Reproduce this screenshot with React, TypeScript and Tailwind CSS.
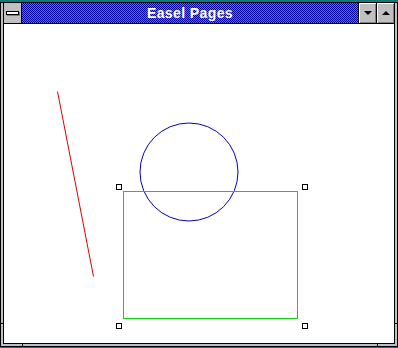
export default function App() {
  const handles = [
    [119, 187],
    [305, 187],
    [119, 326],
    [305, 326],
  ];

  return (
    <div className="w-[398px] h-[348px] bg-[#008080] pt-[2px] pb-[1px]">
      <div className="relative flex flex-col h-full border border-black bg-[#c0c0c0]">
        {/* sizing-border corner ticks */}
        <div className="absolute left-0 top-[320px] w-[3px] h-px bg-black" />
        <div className="absolute right-0 top-[320px] w-[3px] h-px bg-black" />
        <div className="absolute bottom-0 left-[21px] w-px h-[3px] bg-black" />
        <div className="absolute bottom-0 right-[19px] w-px h-[3px] bg-black" />

        <div className="flex flex-col flex-1 mx-[2px] mb-[2px] border-l border-r border-b border-black">
          {/* title bar */}
          <div className="flex h-[21px] border-b border-black">
            <div className="w-[18px] flex items-center justify-center bg-[#c0c0c0] border-r border-black">
              <div className="w-[13px] h-[4px] border border-black bg-white shadow-[1px_1px_0_#808080]" />
            </div>
            <div className="flex-1 flex items-center justify-center bg-[repeating-conic-gradient(#0000a0_0_25%,#4078e8_0_50%)] bg-[length:2px_2px]">
              <span className="text-white font-bold text-[14px] leading-none tracking-[0.4px] font-['Liberation_Sans',Arial,sans-serif]">
                Easel Pages
              </span>
            </div>
            <div className="w-[18px] flex items-center justify-center bg-[#c0c0c0] border-l border-black shadow-[inset_1px_1px_0_#fff,inset_-1px_-1px_0_#808080]">
              <div className="w-0 h-0 border-l-[4px] border-r-[4px] border-t-[4px] border-l-transparent border-r-transparent border-t-black" />
            </div>
            <div className="w-[18px] flex items-center justify-center bg-[#c0c0c0] border-l border-black shadow-[inset_1px_1px_0_#fff,inset_-1px_-1px_0_#808080]">
              <div className="w-0 h-0 border-l-[4px] border-r-[4px] border-b-[4px] border-l-transparent border-r-transparent border-b-black" />
            </div>
          </div>

          {/* client canvas */}
          <div className="relative flex-1 bg-white">
            <svg className="absolute inset-0 w-full h-full" viewBox="4 24 390 319">
              <line x1="57.5" y1="91.5" x2="93.5" y2="276.5" stroke="#e00000" strokeWidth="1" />
              <circle cx="189" cy="172" r="49" fill="none" stroke="#0000c0" strokeWidth="1" />
              <rect x="123.5" y="191.5" width="174" height="127" fill="none" stroke="#00e000" strokeWidth="1" />
              {handles.map(([x, y]) => (
                <rect key={`${x}-${y}`} x={x - 2.5} y={y - 2.5} width="5" height="5" fill="white" stroke="black" strokeWidth="1" />
              ))}
            </svg>
          </div>
        </div>
      </div>
    </div>
  );
}
